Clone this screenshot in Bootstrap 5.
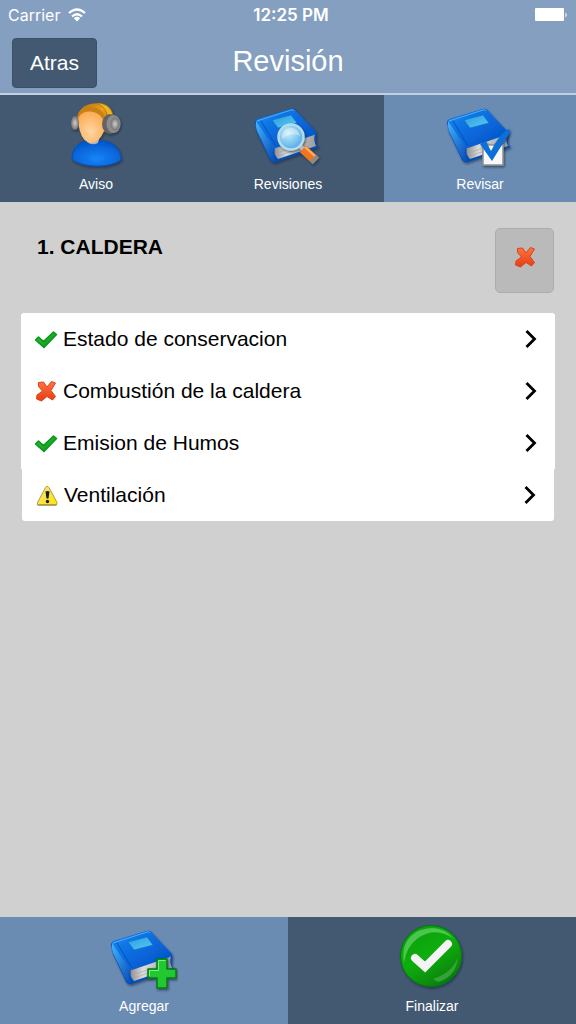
<!DOCTYPE html>
<html lang="es">
<head>
<meta charset="utf-8">
<meta name="viewport" content="width=device-width, initial-scale=1">
<title>Revisión</title>
<link href="https://cdn.jsdelivr.net/npm/bootstrap@5.3.0/dist/css/bootstrap.min.css" rel="stylesheet">
<style>
  body { background: #d0d0d0; color: #000; font-family: "Liberation Sans", Arial, sans-serif; font-size: 21px; line-height: 24px; }
  .app-header { background: #859fc1; color: #fff; border-bottom: 2px solid #c3d0e2; }
  .status-bar { height: 30px; padding: 0 8px; font-family: Inter, sans-serif; font-size: 16px; }
  .status-time { font-size: 17px; font-weight: 600; padding-left: 6px; }
  .title-bar { padding: 8px 12px 5px; }
  .app-title { font-size: 29px; line-height: 32px; font-weight: 400; padding-bottom: 4px; }
  .btn-back { --bs-btn-color: #fff; --bs-btn-bg: #425971; --bs-btn-border-color: #3a5069; --bs-btn-hover-color: #fff; --bs-btn-hover-bg: #3a5069; --bs-btn-font-size: 21px; --bs-btn-line-height: 24px; --bs-btn-border-radius: 4px; padding: 12px 17px; display: block; }
  .tab-item { background: #425971; color: #fff; font-size: 14px; line-height: 17px; padding: 8px 0 9px; text-decoration: none; gap: 5px; }
  .tab-item.current { background: #6a8cb3; }
  .tab-item svg { width: 68px; height: 68px; }
  .section-head { padding: 26px 22px 20px 37px; }
  .section-title { font-size: 21px; line-height: 24px; font-weight: 700; padding-top: 7px; }
  .btn-state { --bs-btn-bg: #bababa; --bs-btn-border-color: #adadad; --bs-btn-hover-bg: #b0b0b0; --bs-btn-border-radius: 5px; padding: 16px 16px 23px 17px; line-height: 1; }
  .check-list { margin: 0 21px; --bs-list-group-border-width: 0; --bs-list-group-border-radius: 3px; --bs-list-group-color: #000; --bs-list-group-action-color: #000; }
  .check-row { padding: 14px 18px 14px 13px; gap: 5px; }
  .check-row.last-row { margin: 0 1px; width: auto; }
  .state-icon { width: 24px; height: 24px; flex: none; }
</style>
</head>
<body class="d-flex flex-column min-vh-100">
<svg width="0" height="0" class="position-absolute" aria-hidden="true">
  <defs>
    <linearGradient id="cover" x1="0" y1="0" x2="1" y2="1"><stop offset="0" stop-color="#1c8af0"/><stop offset=".5" stop-color="#0868dc"/><stop offset="1" stop-color="#0450be"/></linearGradient>
    <linearGradient id="spine" x1="0" y1="0" x2="1" y2="1"><stop offset="0" stop-color="#42b4ff"/><stop offset="1" stop-color="#0648b4"/></linearGradient>
    <linearGradient id="pages" x1="0" y1="0" x2="1" y2="0"><stop offset="0" stop-color="#8f8f8f"/><stop offset=".3" stop-color="#dcdcdc"/><stop offset="1" stop-color="#9c9c9c"/></linearGradient>
    <linearGradient id="plate" x1="0" y1="0" x2="1" y2="1"><stop offset="0" stop-color="#2a9ee0"/><stop offset="1" stop-color="#5cc8f4"/></linearGradient>
    <radialGradient id="lens" cx=".4" cy=".35" r=".7"><stop offset="0" stop-color="#c8eefc"/><stop offset="1" stop-color="#4aa8e4"/></radialGradient>
    <radialGradient id="face" cx=".45" cy=".65" r=".65"><stop offset="0" stop-color="#ffd6a2"/><stop offset="1" stop-color="#fba94e"/></radialGradient>
    <linearGradient id="hair" x1="0" y1="0" x2="1" y2="1"><stop offset="0" stop-color="#ab6809"/><stop offset=".45" stop-color="#e9a21c"/><stop offset="1" stop-color="#a86408"/></linearGradient>
    <radialGradient id="torso" cx=".5" cy=".7" r=".65"><stop offset="0" stop-color="#1685fa"/><stop offset="1" stop-color="#0358cc"/></radialGradient>
    <radialGradient id="ear"><stop offset="0" stop-color="#d0d0d0"/><stop offset="1" stop-color="#707070"/></radialGradient>
    <linearGradient id="green" x1="0" y1="0" x2="1" y2="1"><stop offset="0" stop-color="#35c23a"/><stop offset="1" stop-color="#079411"/></linearGradient>
    <linearGradient id="disc" x1="0" y1="0" x2=".6" y2="1"><stop offset="0" stop-color="#079a10"/><stop offset=".55" stop-color="#0cae0c"/><stop offset="1" stop-color="#068008"/></linearGradient>
    <linearGradient id="red" x1="0" y1="0" x2="0" y2="1"><stop offset="0" stop-color="#ff7440"/><stop offset="1" stop-color="#e83c14"/></linearGradient>
    <linearGradient id="yellow" x1="0" y1="0" x2="1" y2="1"><stop offset="0" stop-color="#f7e08c"/><stop offset="1" stop-color="#fce800"/></linearGradient>
    <filter id="shade" x="-20%" y="-20%" width="150%" height="150%"><feDropShadow dx="1" dy="1.5" stdDeviation="1.2" flood-color="#0a1a30" flood-opacity=".6"/></filter>
    <symbol id="book" viewBox="0 0 68 68" overflow="visible">
      <g filter="url(#shade)">
        <path d="M1 20Q1 17 4 16L37 6Q39 5 41 7L62 30Q63 32 62 34L62 42L65 44L22 59Q18 60 16 57L3 29Z" fill="#0450b8"/>
        <path d="M21 44L61 31Q59 37 62 43L24 56Q19 51 21 44Z" fill="url(#pages)"/>
        <path d="M23 50L60 37M24 53L61 40" stroke="#a2a2a2" stroke-width=".6"/>
        <path d="M2 18Q1 23 3 28L16 55Q18 59 22 58Q17 50 21 43L7 18Z" fill="url(#spine)"/>
        <path d="M2 18Q2 17 4 16L37 6Q39 5 41 7L62 29Q62 31 60 32L22 45Q20 45 19 43Z" fill="url(#cover)"/>
        <path d="M3 18L37 7Q39 6 40 8" fill="none" stroke="#4aaeff" stroke-width="1"/>
        <path d="M7 18L22 43" stroke="#0452c0" stroke-width="1"/>
        <path d="M18 17L37 12L43 20L24 25Z" fill="url(#plate)" stroke="#0c72c8" stroke-width=".6"/>
      </g>
    </symbol>
    <symbol id="ok" viewBox="0 0 24 24">
      <path d="M1.500 13L4.500 10L9.500 14.500L19.500 5L22.500 7.500L10 20.500Z" fill="url(#green)" stroke="#0b9420" stroke-width="1.500" stroke-linejoin="round"/>
    </symbol>
    <symbol id="bad" viewBox="0 0 24 24">
      <path d="M4.500 3.500L9.500 3L13 8L17.500 2.500L21.500 4L17 11.500L21.500 17.500L18.500 21L13 17.500L7.500 22L2.500 20L3 16L8.500 12L4.500 7.500Z" fill="url(#red)" stroke="#d9431c" stroke-width="1" stroke-linejoin="round"/>
    </symbol>
    <symbol id="warn" viewBox="0 0 24 24">
      <path d="M12 3.500Q13 3 14 4.500L22 19.500Q22.500 22 20.500 22H3.500Q1.500 22 2.500 19.500L10.500 4.500Q11 3 12 3.500Z" fill="url(#yellow)" stroke="#b49c4a" stroke-width="1"/>
      <path d="M2.500 22H21.500" stroke="#8c7a3c" stroke-width="1"/>
      <path d="M10.500 8.500Q12.500 7.500 14.500 8.500L13.500 15.500H11.500Z" fill="#1c1c14"/><circle cx="12.500" cy="18.500" r="1.700" fill="#1c1c14"/>
    </symbol>
    <symbol id="next" viewBox="0 0 12 20">
      <path d="M1.500 2L9.500 10L1.500 18" fill="none" stroke="#000" stroke-width="2.800"/>
    </symbol>
  </defs>
</svg>

<header class="app-header">
  <div class="status-bar row g-0 align-items-center">
    <div class="col d-flex align-items-center gap-2">
      <span>Carrier</span>
      <svg width="18" height="14" viewBox="0 0 18 14" aria-hidden="true"><g fill="none" stroke="#fff" stroke-width="2.200"><path d="M1 5Q9 -2 17 5"/><path d="M4 8.500Q9 4 14 8.500"/></g><path d="M5.800 10.200Q9 7.500 12.200 10.200L9 13.500Z" fill="#fff"/></svg>
    </div>
    <div class="col-auto status-time">12:25 PM</div>
    <div class="col d-flex justify-content-end">
      <svg width="33" height="14" viewBox="0 0 33 14" aria-hidden="true"><rect width="29" height="13" rx="1" fill="#fff"/><path d="M30.500 4.500Q33 7 30.500 9.500Z" fill="#fff"/></svg>
    </div>
  </div>
  <div class="title-bar row g-0 align-items-center">
    <div class="col"><button type="button" class="btn btn-back">Atras</button></div>
    <h1 class="app-title col-auto m-0">Revisión</h1>
    <div class="col"></div>
  </div>
</header>

<nav class="row g-0" aria-label="Secciones">
  <a href="#aviso" class="tab-item col d-flex flex-column align-items-center">
    <svg viewBox="0 0 68 68" aria-hidden="true">
      <g filter="url(#shade)">
        <path d="M10 56Q10 42 23 38H44Q58 42 59 57Q50 63 35 63Q18 63 10 56Z" fill="url(#torso)" stroke="#0650b4" stroke-width=".8"/>
        <path d="M25 36H37L36 40Q30 43 25 39Z" fill="#a8b4c4"/>
        <path d="M16 20Q15 4 28 1Q46 -3 50 12L46 27L38 31H20Z" fill="url(#hair)"/>
        <path d="M32 0Q43 1 46 14L51 12Q48 -1 32 0Z" fill="#f0b51e" stroke="#9c660e" stroke-width=".6"/>
        <path d="M17 10Q29 3 42 12Q45 20 42 28Q37 40 29 40Q21 39 18 28Q15 18 17 10Z" fill="url(#face)"/>
        <path d="M15 17Q15 9 20 6Q28 2 37 6Q44 10 43 20Q38 9 29 8.500Q20 8 17 14Z" fill="#c98014"/>
        <ellipse cx="13" cy="20" rx="4" ry="7" fill="url(#ear)"/>
        <ellipse cx="48" cy="21" rx="8" ry="10" fill="#646464"/>
        <ellipse cx="51.500" cy="21" rx="7" ry="9" fill="#8c8c8c"/>
        <ellipse cx="53" cy="21" rx="4.500" ry="6.500" fill="url(#ear)"/>
      </g>
    </svg>
    <span>Aviso</span>
  </a>
  <a href="#revisiones" class="tab-item col d-flex flex-column align-items-center">
    <svg viewBox="0 0 68 68" aria-hidden="true">
      <use href="#book" width="68" height="68"/>
      <g filter="url(#shade)">
        <path d="M46 43L51 48" stroke="#b8b8b8" stroke-width="4"/>
        <path d="M49 46L61 57" stroke="#f0761c" stroke-width="9"/>
        <path d="M51 44L62 54" stroke="#ffb06a" stroke-width="2"/>
        <path d="M59 55L62 58" stroke="#8a8a8a" stroke-width="9"/>
        <circle cx="37" cy="34" r="12.500" fill="url(#lens)" stroke="#b4dcec" stroke-width="2.500"/>
      </g>
      <path d="M28 32Q30 24 39 25Q45 27 46 33Q37 29 28 36Z" fill="#fff" opacity=".35"/>
    </svg>
    <span>Revisiones</span>
  </a>
  <a href="#revisar" class="tab-item current col d-flex flex-column align-items-center" aria-current="page">
    <svg viewBox="0 0 68 68" aria-hidden="true">
      <use href="#book" width="68" height="68"/>
      <g filter="url(#shade)">
        <rect x="37" y="42" width="20" height="20" fill="#f8f8f8" stroke="#909090" stroke-width="1.500"/>
        <path d="M34 41L40 38L45 48Q52 33 62 26L64 27Q64 31 59 37L46 58Z" fill="#0c6fd8"/>
      </g>
    </svg>
    <span>Revisar</span>
  </a>
</nav>

<main class="flex-grow-1">
  <div class="section-head d-flex justify-content-between align-items-start">
    <h2 class="section-title m-0">1. CALDERA</h2>
    <button type="button" class="btn btn-state" aria-label="Estado: incorrecto"><svg class="state-icon d-block" aria-hidden="true"><use href="#bad"/></svg></button>
  </div>
  <div class="check-list list-group">
    <a href="#estado" class="check-row list-group-item list-group-item-action d-flex align-items-center">
      <svg class="state-icon" aria-hidden="true"><use href="#ok"/></svg><span class="flex-grow-1">Estado de conservacion</span><svg width="12" height="20" aria-hidden="true"><use href="#next"/></svg>
    </a>
    <a href="#combustion" class="check-row list-group-item list-group-item-action d-flex align-items-center">
      <svg class="state-icon" aria-hidden="true"><use href="#bad"/></svg><span class="flex-grow-1">Combustión de la caldera</span><svg width="12" height="20" aria-hidden="true"><use href="#next"/></svg>
    </a>
    <a href="#emision" class="check-row list-group-item list-group-item-action d-flex align-items-center">
      <svg class="state-icon" aria-hidden="true"><use href="#ok"/></svg><span class="flex-grow-1">Emision de Humos</span><svg width="12" height="20" aria-hidden="true"><use href="#next"/></svg>
    </a>
    <a href="#ventilacion" class="check-row last-row list-group-item list-group-item-action d-flex align-items-center">
      <svg class="state-icon" aria-hidden="true"><use href="#warn"/></svg><span class="flex-grow-1">Ventilación</span><svg width="12" height="20" aria-hidden="true"><use href="#next"/></svg>
    </a>
  </div>
</main>

<footer class="row g-0">
  <a href="#agregar" class="tab-item current col d-flex flex-column align-items-center">
    <svg viewBox="0 0 68 68" aria-hidden="true">
      <use href="#book" width="68" height="68"/>
      <path d="M47 34H57V44H66V53H57V63H47V53H38V44H47Z" fill="#23c832" stroke="#067a14" stroke-width="1.500" stroke-linejoin="round" filter="url(#shade)"/>
      <path d="M48.500 45.500V35.500H55.500M39.500 51V45.500H48.500" fill="none" stroke="#7cf07c" stroke-width="1"/>
    </svg>
    <span>Agregar</span>
  </a>
  <a href="#finalizar" class="tab-item col d-flex flex-column align-items-center">
    <svg viewBox="0 0 68 68" aria-hidden="true">
      <circle cx="33" cy="31" r="30.500" fill="url(#disc)" stroke="#067a0c" stroke-width="1" filter="url(#shade)"/>
      <path d="M6 38Q2 16 20 6Q42 -3 56 14Q38 1 20 13Q8 22 6 38Z" fill="#8be88b" opacity=".5"/>
      <path d="M40 57Q58 52 60 32Q54 48 35 54Z" fill="#5cc060" opacity=".5"/>
      <path d="M17 33L27 42L50 19" fill="none" stroke="#f4f4f4" stroke-width="8" stroke-linecap="round"/>
    </svg>
    <span>Finalizar</span>
  </a>
</footer>
<script src="https://cdn.jsdelivr.net/npm/bootstrap@5.3.0/dist/js/bootstrap.bundle.min.js"></script>
</body>
</html>
